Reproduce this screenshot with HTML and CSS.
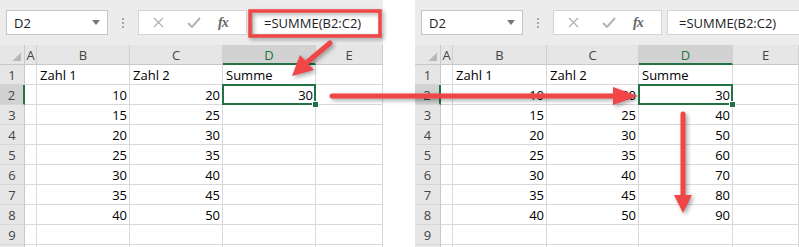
FILE: index.html
```html
<!DOCTYPE html>
<html lang="de">
<head>
    <meta charset="UTF-8">
    <title>SUMME nach unten kopieren</title>
    <link rel="stylesheet" href="styles.css">
</head>
<body>
<div class="page">
    <!-- Vorher: Formel nur in D2 -->
    <div class="shot shot-left">
        <div class="toolbar">
            <div class="namebox"><span>D2</span><span class="caret"></span></div>
            <div class="grip"></div>
            <div class="fx-buttons">
                <svg class="btn-x" width="11" height="11" viewBox="0 0 11 11"><path d="M1 1L10 10M10 1L1 10" stroke="#b4b4b4" stroke-width="1.4"/></svg>
                <svg class="btn-ok" width="14" height="11" viewBox="0 0 14 11"><path d="M1 6L5 10L13 1" fill="none" stroke="#b4b4b4" stroke-width="2"/></svg>
                <i class="btn-fx">fx</i>
            </div>
            <div class="formula">=SUMME(B2:C2)</div>
        </div>
        <div class="sheet">
            <div class="corner"></div><div class="ch">A</div><div class="ch">B</div><div class="ch">C</div><div class="ch sel">D</div><div class="ch">E</div>
            <div class="rh">1</div><div class="c"></div><div class="c">Zahl 1</div><div class="c">Zahl 2</div><div class="c">Summe</div><div class="c"></div>
            <div class="rh sel">2</div><div class="c"></div><div class="c n">10</div><div class="c n">20</div><div class="c n active">30</div><div class="c"></div>
            <div class="rh">3</div><div class="c"></div><div class="c n">15</div><div class="c n">25</div><div class="c"></div><div class="c"></div>
            <div class="rh">4</div><div class="c"></div><div class="c n">20</div><div class="c n">30</div><div class="c"></div><div class="c"></div>
            <div class="rh">5</div><div class="c"></div><div class="c n">25</div><div class="c n">35</div><div class="c"></div><div class="c"></div>
            <div class="rh">6</div><div class="c"></div><div class="c n">30</div><div class="c n">40</div><div class="c"></div><div class="c"></div>
            <div class="rh">7</div><div class="c"></div><div class="c n">35</div><div class="c n">45</div><div class="c"></div><div class="c"></div>
            <div class="rh">8</div><div class="c"></div><div class="c n">40</div><div class="c n">50</div><div class="c"></div><div class="c"></div>
            <div class="rh">9</div><div class="c"></div><div class="c"></div><div class="c"></div><div class="c"></div><div class="c"></div>
            <div class="rh"></div><div class="c"></div><div class="c"></div><div class="c"></div><div class="c"></div><div class="c"></div>
        </div>
    </div>

    <!-- Nachher: Formel bis D8 kopiert -->
    <div class="shot shot-right">
        <div class="toolbar">
            <div class="namebox"><span>D2</span><span class="caret"></span></div>
            <div class="grip"></div>
            <div class="fx-buttons">
                <svg class="btn-x" width="11" height="11" viewBox="0 0 11 11"><path d="M1 1L10 10M10 1L1 10" stroke="#b4b4b4" stroke-width="1.4"/></svg>
                <svg class="btn-ok" width="14" height="11" viewBox="0 0 14 11"><path d="M1 6L5 10L13 1" fill="none" stroke="#b4b4b4" stroke-width="2"/></svg>
                <i class="btn-fx">fx</i>
            </div>
            <div class="formula">=SUMME(B2:C2)</div>
        </div>
        <div class="sheet">
            <div class="corner"></div><div class="ch">A</div><div class="ch">B</div><div class="ch">C</div><div class="ch sel">D</div><div class="ch">E</div>
            <div class="rh">1</div><div class="c"></div><div class="c">Zahl 1</div><div class="c">Zahl 2</div><div class="c">Summe</div><div class="c"></div>
            <div class="rh sel">2</div><div class="c"></div><div class="c n">10</div><div class="c n">20</div><div class="c n active">30</div><div class="c"></div>
            <div class="rh">3</div><div class="c"></div><div class="c n">15</div><div class="c n">25</div><div class="c n">40</div><div class="c"></div>
            <div class="rh">4</div><div class="c"></div><div class="c n">20</div><div class="c n">30</div><div class="c n">50</div><div class="c"></div>
            <div class="rh">5</div><div class="c"></div><div class="c n">25</div><div class="c n">35</div><div class="c n">60</div><div class="c"></div>
            <div class="rh">6</div><div class="c"></div><div class="c n">30</div><div class="c n">40</div><div class="c n">70</div><div class="c"></div>
            <div class="rh">7</div><div class="c"></div><div class="c n">35</div><div class="c n">45</div><div class="c n">80</div><div class="c"></div>
            <div class="rh">8</div><div class="c"></div><div class="c n">40</div><div class="c n">50</div><div class="c n">90</div><div class="c"></div>
            <div class="rh">9</div><div class="c"></div><div class="c"></div><div class="c"></div><div class="c"></div><div class="c"></div>
            <div class="rh"></div><div class="c"></div><div class="c"></div><div class="c"></div><div class="c"></div><div class="c"></div>
        </div>
    </div>

    <!-- Rote Markierungen über beiden Screenshots -->
    <svg class="marks" width="799" height="247" viewBox="0 0 799 247">
        <rect x="250" y="11" width="130" height="25" fill="none" stroke="#f04646" stroke-width="3.5"/>
        <line x1="330" y1="43" x2="305" y2="64" stroke="#f04646" stroke-width="5" stroke-linecap="round"/>
        <polygon points="292,76 300,55 314,70" fill="#f04646"/>
        <line x1="332" y1="96" x2="616" y2="96" stroke="#f04646" stroke-width="5" stroke-linecap="round"/>
        <polygon points="613,87 638,96 613,105" fill="#f04646"/>
        <line x1="683" y1="114" x2="683" y2="197" stroke="#f04646" stroke-width="5" stroke-linecap="round"/>
        <polygon points="674,195 692,195 683,213" fill="#f04646"/>
    </svg>
</div>
</body>
</html>
```

FILE: styles.css
```css
body {
    margin: 0;
    background-color: #fff;
    font-family: 'Open Sans', sans-serif;
}
.page {
    position: relative;
    display: flex;
    gap: 32px;
    width: 799px;
    height: 247px;
    overflow: hidden;
}
.shot {
    overflow: hidden;
    background-color: #fff;
}
.shot-left {
    width: 383px;
}
.shot-right {
    width: 384px;
}
.toolbar {
    height: 45px;
    box-sizing: border-box;
    padding: 10px 0 0 6px;
    background-color: #ececec;
    display: flex;
    align-items: flex-start;
}
.namebox {
    width: 102px;
    height: 25px;
    box-sizing: border-box;
    flex-shrink: 0;
    background-color: #fff;
    border: 1px solid #c6c6c6;
    padding: 0 7px 0 7px;
    display: flex;
    align-items: center;
    justify-content: space-between;
    font-size: 13px;
    color: #222;
}
.caret {
    width: 0;
    height: 0;
    border-left: 4px solid transparent;
    border-right: 4px solid transparent;
    border-top: 5px solid #777;
}
.grip {
    width: 2px;
    height: 11px;
    flex-shrink: 0;
    margin: 7px 14px 0 14px;
    background: radial-gradient(circle, #a8a8a8 0.9px, transparent 1.2px) 0 0 / 2px 4px repeat-y;
}
.fx-buttons {
    width: 109px;
    height: 25px;
    box-sizing: border-box;
    flex-shrink: 0;
    background-color: #fff;
    border: 1px solid #d4d4d4;
    display: flex;
    align-items: center;
    padding-left: 14px;
}
.btn-ok {
    margin-left: 23px;
}
.btn-fx {
    margin-left: 17px;
    font-family: 'Liberation Serif', serif;
    font-size: 14px;
    font-weight: bold;
    color: #666;
    letter-spacing: -1px;
}
.formula {
    flex: 1;
    min-width: 160px;
    height: 25px;
    box-sizing: border-box;
    margin-left: 5px;
    background-color: #fff;
    border: 1px solid #d4d4d4;
    padding-left: 11px;
    display: flex;
    align-items: center;
    font-size: 13px;
    color: #222;
    white-space: nowrap;
}
.sheet {
    display: grid;
    grid-auto-rows: 20px;
}
.shot-left .sheet {
    grid-template-columns: 25px 12px 93px 93px 93px 67px;
}
.shot-right .sheet {
    grid-template-columns: 26px 12px 94px 92px 94px 66px;
}
.corner,
.ch,
.rh {
    box-sizing: border-box;
    background-color: #e6e6e6;
    color: #444;
    font-size: 13px;
    display: flex;
    align-items: center;
    justify-content: center;
}
.corner {
    border-right: 1px solid #c8c8c8;
    border-bottom: 1px solid #c8c8c8;
    background: linear-gradient(135deg, #e6e6e6 62%, #b9b9b9 62%) no-repeat right 3px bottom 3px / 11px 11px, #e6e6e6;
}
.ch {
    border-right: 1px solid #cfcfcf;
    border-bottom: 1px solid #c8c8c8;
    padding-top: 1px;
}
.rh {
    border-right: 1px solid #c8c8c8;
    border-bottom: 1px solid #d6d6d6;
    padding-top: 1px;
}
.ch.sel {
    background-color: #d2d2d2;
    color: #217346;
    border-bottom: 2px solid #217346;
}
.rh.sel {
    background-color: #d2d2d2;
    border-right: 2px solid #217346;
}
.c {
    box-sizing: border-box;
    border-right: 1px solid #d9d9d9;
    border-bottom: 1px solid #d9d9d9;
    padding: 0 3px 2px 3px;
    display: flex;
    align-items: flex-end;
    font-size: 13px;
    line-height: 1;
    color: #000;
    white-space: nowrap;
}
.c.n {
    justify-content: flex-end;
    padding-right: 2px;
}
.c.active {
    position: relative;
}
.c.active::before {
    content: '';
    position: absolute;
    top: -1px;
    left: -1px;
    right: -1px;
    bottom: -1px;
    border: 2px solid #217346;
    z-index: 1;
}
.c.active::after {
    content: '';
    position: absolute;
    right: -4px;
    bottom: -4px;
    width: 5px;
    height: 5px;
    background-color: #217346;
    border: 1px solid #fff;
    z-index: 2;
}
.marks {
    position: absolute;
    top: 0;
    left: 0;
    pointer-events: none;
    filter: drop-shadow(2px 2px 2px rgba(0, 0, 0, 0.35));
}
```
